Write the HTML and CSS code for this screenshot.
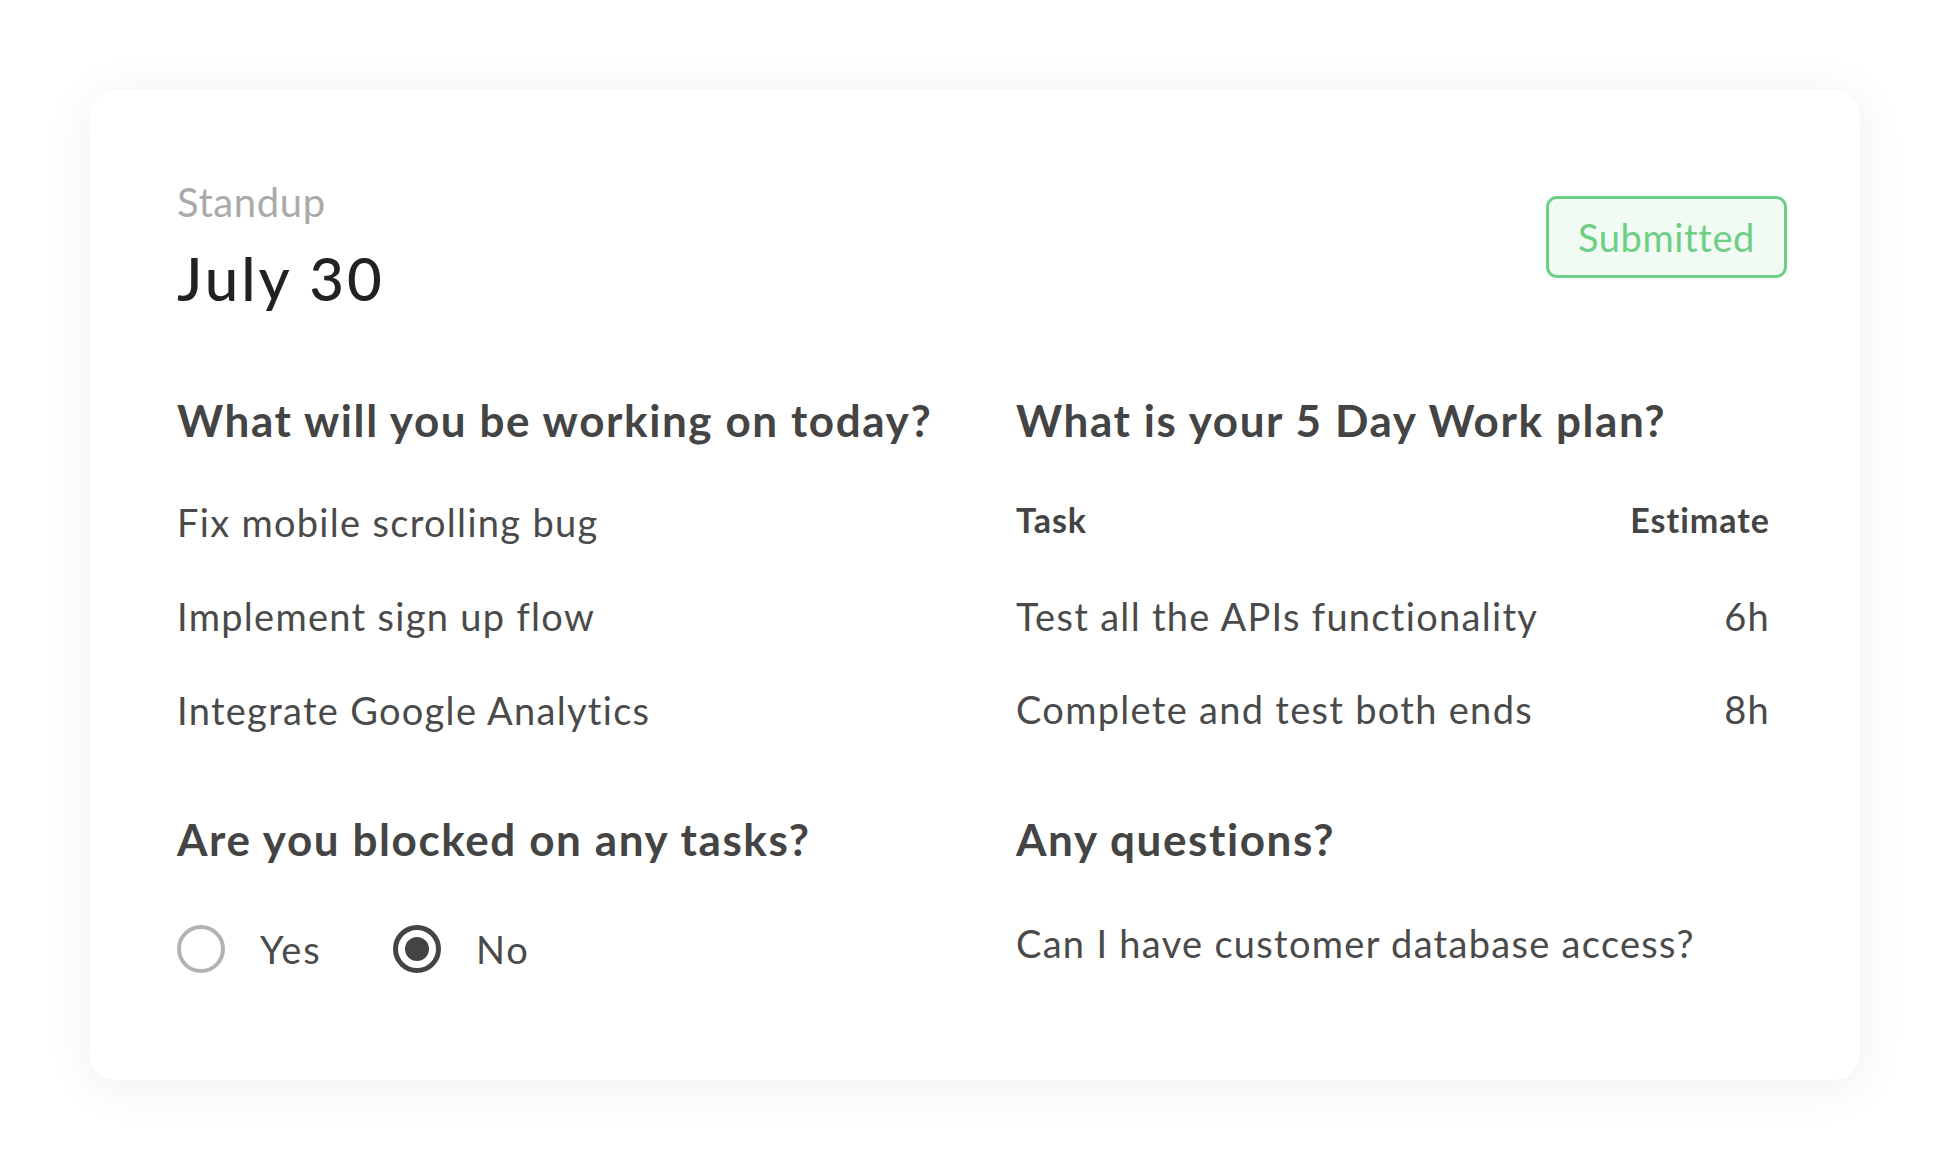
FILE: index.html
```html
<!DOCTYPE html>
<html lang="en">
<head>
<meta charset="utf-8">
<title>Standup</title>
<link rel="stylesheet" href="styles.css">
</head>
<body>
<div class="card">
  <div class="card-header">
    <div class="title-block">
      <div class="eyebrow">Standup</div>
      <div class="date">July 30</div>
    </div>
    <div class="badge">Submitted</div>
  </div>
  <div class="grid">
    <section class="section">
      <h2 class="question">What will you be working on today?</h2>
      <ul class="answers">
        <li>Fix mobile scrolling bug</li>
        <li>Implement sign up flow</li>
        <li>Integrate Google Analytics</li>
      </ul>
    </section>
    <section class="section">
      <h2 class="question">What is your 5 Day Work plan?</h2>
      <div class="plan">
        <div class="plan-row plan-head"><span>Task</span><span>Estimate</span></div>
        <div class="plan-row"><span>Test all the APIs functionality</span><span>6h</span></div>
        <div class="plan-row"><span>Complete and test both ends</span><span>8h</span></div>
      </div>
    </section>
    <section class="section">
      <h2 class="question">Are you blocked on any tasks?</h2>
      <div class="radios">
        <div class="radio-option"><span class="radio"></span><span class="radio-label">Yes</span></div>
        <div class="radio-option"><span class="radio radio-checked"></span><span class="radio-label">No</span></div>
      </div>
    </section>
    <section class="section">
      <h2 class="question">Any questions?</h2>
      <p class="answer-text">Can I have customer database access?</p>
    </section>
  </div>
</div>
</body>
</html>
```

FILE: styles.css
```css
* { box-sizing: border-box; }
html, body { margin: 0; padding: 0; background: #ffffff; }
body {
  font-family: "Lato", "Noto Sans", sans-serif;
  color: #454545;
  width: 1950px;
  height: 1170px;
  overflow: hidden;
}
.card {
  margin: 90px 0 0 90px;
  width: 1770px;
  height: 990px;
  background: #fff;
  border-radius: 26px;
  box-shadow: 0 6px 50px rgba(0, 0, 0, 0.07);
  padding: 88px 73px 0 87px;
}
.card-header {
  display: flex;
  justify-content: space-between;
  align-items: flex-start;
}
.eyebrow {
  font-size: 40px;
  line-height: 48px;
  letter-spacing: 0.6px;
  color: #aaaaaa;
  font-weight: 400;
}
.date {
  margin-top: 20px;
  font-size: 60px;
  line-height: 64px;
  letter-spacing: 3px;
  color: #222222;
  font-weight: 500;
}
.badge {
  margin-top: 18px;
  width: 241px;
  height: 82px;
  border: 3px solid #6ccf84;
  border-radius: 11px;
  background: #f2faf4;
  color: #6ccf84;
  font-size: 38px;
  letter-spacing: 0.6px;
  display: flex;
  align-items: center;
  justify-content: center;
}
.grid {
  display: grid;
  grid-template-columns: 839px 754px;
  row-gap: 76px;
  margin-top: 82px;
}
.question {
  margin: 0;
  font-size: 44px;
  line-height: 56px;
  letter-spacing: 1.6px;
  font-weight: 700;
  color: #444444;
}
.answers {
  list-style: none;
  margin: 49px 0 0;
  padding: 0;
  display: flex;
  flex-direction: column;
  gap: 44px;
}
.answers li, .answer-text, .plan-row {
  font-size: 38px;
  line-height: 50px;
  letter-spacing: 1.3px;
  color: #4a4a4a;
}
.plan { margin-top: 52px; display: flex; flex-direction: column; gap: 43px; }
.plan-row { display: flex; justify-content: space-between; }
.plan-head {
  font-size: 34px;
  line-height: 40px;
  letter-spacing: 1px;
  font-weight: 700;
  color: #444;
  margin-bottom: 8px;
}
.answer-text { margin: 51px 0 0; }
.radios { margin-top: 57px; display: flex; }
.radio-option { display: flex; align-items: center; width: 216px; }
.radio {
  width: 48px;
  height: 48px;
  border-radius: 50%;
  border: 4px solid #b3b3b3;
  display: flex;
  align-items: center;
  justify-content: center;
  flex: none;
}
.radio-checked { border: 5px solid #444444; }
.radio-checked::after {
  content: "";
  width: 24px;
  height: 24px;
  border-radius: 50%;
  background: #444444;
}
.radio-label {
  margin-left: 35px;
  font-size: 38px;
  line-height: 50px;
  letter-spacing: 1.8px;
  color: #4a4a4a;
}
```
